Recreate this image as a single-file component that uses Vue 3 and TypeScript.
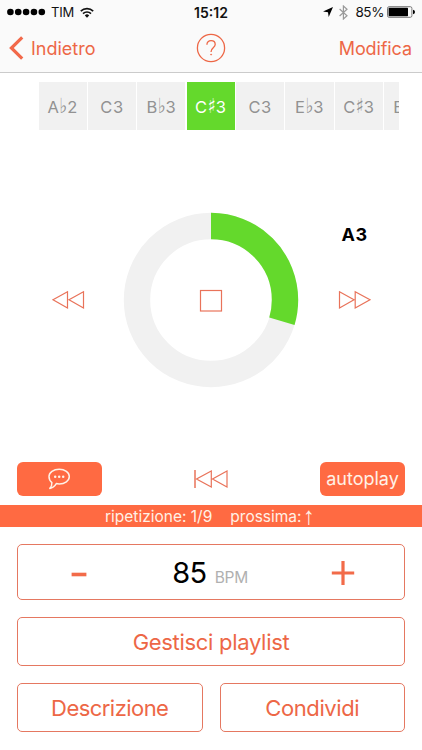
<script setup lang="ts">
import { ref } from 'vue'

interface Note {
  name: string
  accidental?: string
  octave?: number
}

const notes: Note[] = [
  { name: 'A', accidental: '♭', octave: 2 },
  { name: 'C', octave: 3 },
  { name: 'B', accidental: '♭', octave: 3 },
  { name: 'C', accidental: '♯', octave: 3 },
  { name: 'C', octave: 3 },
  { name: 'E', accidental: '♭', octave: 3 },
  { name: 'C', accidental: '♯', octave: 3 },
  { name: 'E' },
]
const activeIndex = 3
const bpm = ref(85)

const progress = 0.296
const radius = 74
const circumference = 2 * Math.PI * radius
const dash = `${progress * circumference} ${circumference}`
</script>

<template>
  <div class="screen">
    <header class="top">
      <div class="status">
        <div class="carrier">
          <svg width="40" height="8" viewBox="0 0 40 8"><circle v-for="i in 5" :key="i" :cx="3.4 + (i - 1) * 7.85" cy="4" r="3.3" /></svg>
          <span class="tim">TIM</span>
          <svg class="wifi" width="14" height="11" viewBox="0 0 14 11" fill="none" stroke="#111" stroke-width="1.7">
            <path d="M.8 4.1a9 9 0 0 1 12.4 0M3 6.6a5.8 5.8 0 0 1 8 0" />
            <path d="M4.8 8.4a3.2 3.2 0 0 1 4.4 0L7 10.8z" fill="#111" stroke="none" />
          </svg>
        </div>
        <span class="clock">15:12</span>
        <div class="indicators">
          <svg width="10" height="10" viewBox="0 0 10 10"><path d="M10 0 5.7 10 5 5.2 0 4.5z" /></svg>
          <svg class="bt" width="9" height="15" viewBox="0 0 9 15" fill="none" stroke="#999" stroke-width="1.2"><path d="M.6 4 8 10.8 4.4 14V1L8 4.2.6 11" /></svg>
          <span class="percent">85%</span>
          <svg class="battery" width="28" height="12" viewBox="0 0 28 12">
            <rect x=".5" y=".7" width="24.4" height="10.6" rx="1.6" fill="none" stroke="#777" />
            <rect x="1.6" y="1.8" width="19.4" height="8.4" rx=".6" />
            <path d="M26 3.8q2 .3 2 2.2t-2 2.2z" />
          </svg>
        </div>
      </div>
      <nav class="nav">
        <button class="back">
          <svg width="15" height="24" viewBox="0 0 15 24" fill="none" stroke="#f2694a" stroke-width="3.2"><path d="M13.2 1.3 2.4 12l10.8 10.7" /></svg>
          <span>Indietro</span>
        </button>
        <button class="help">
          <svg width="30" height="30" viewBox="0 0 30 30" fill="none" stroke="#ed6746" stroke-width="1.3">
            <circle cx="15" cy="15" r="13.6" />
            <path d="M10.9 11.8c0-2.5 1.7-4.1 4.2-4.1 2.4 0 4.1 1.5 4.1 3.7 0 3.2-4.1 3.4-4.1 7v.5" />
            <circle cx="15.1" cy="21.6" r=".5" fill="#ed6746" stroke-width=".8" />
          </svg>
        </button>
        <button class="edit">Modifica</button>
      </nav>
    </header>

    <div class="strip">
      <div v-for="(n, i) in notes" :key="i" class="note" :class="{ active: i === activeIndex, partial: !n.octave }">
        <span>{{ n.name }}</span><span v-if="n.accidental" class="acc">{{ n.accidental }}</span><span v-if="n.octave">{{ n.octave }}</span>
      </div>
    </div>

    <main class="player">
      <button class="side prev">
        <svg width="34" height="20" viewBox="0 0 34 20" fill="none" stroke="#e9735a" stroke-width="1.2"><path d="M16.5 1.7V18L2 9.8zM32.5 1.7V18L18 9.8z" /></svg>
      </button>
      <div class="dial">
        <svg width="176" height="176" viewBox="0 0 176 176" fill="none">
          <circle cx="88" cy="88" :r="radius" stroke="#f1f1f1" stroke-width="26.4" />
          <circle cx="88" cy="88" :r="radius" stroke="#64d92c" stroke-width="26.4" :stroke-dasharray="dash" transform="rotate(-90 88 88)" />
          <rect x="77.5" y="78.5" width="21" height="20.5" stroke="#e9735a" stroke-width="1.2" />
        </svg>
      </div>
      <div class="next">
        <strong>A3</strong>
        <svg width="34" height="20" viewBox="0 0 34 20" fill="none" stroke="#e9735a" stroke-width="1.2"><path d="M1.5 1.7V18L16 9.8zM17.2 1.7V18L32 9.8z" /></svg>
      </div>
    </main>

    <div class="tools">
      <button class="solid chat">
        <svg width="24" height="22" viewBox="0 0 24 22" fill="none" stroke="#fff1e6" stroke-width="1.5" stroke-linejoin="round">
          <path d="M12.2 1.3c5.7 0 10.1 3.2 10.1 7.3s-4.4 7.3-10.1 7.3c-1 0-2-.1-2.9-.3-1.6 2.7-3.8 4.4-6.5 4.8 1.5-1.5 2.2-3.5 2.1-5.8-1.8-1.4-2.9-3.4-2.9-6 0-4.1 4.5-7.3 10.2-7.3z" />
          <g fill="#fff1e6" stroke="none"><circle cx="8.2" cy="8.7" r="1.25" /><circle cx="12.2" cy="8.7" r="1.25" /><circle cx="16.2" cy="8.7" r="1.25" /></g>
        </svg>
      </button>
      <svg width="36" height="20" viewBox="0 0 36 20" fill="none" stroke="#e9735a" stroke-width="1.2"><path d="M18.3 2v16L3.5 10zM34 2v16L19.5 10z" /><path d="M2 1v18" stroke-width="1.5" /></svg>
      <button class="solid">autoplay</button>
    </div>

    <div class="banner">
      <span class="rep">ripetizione: 1/9</span>
      <span class="upcoming">prossima:</span><span class="arrow">↑</span>
    </div>

    <footer class="controls">
      <div class="tempo">
        <button class="step" @click="bpm--"><svg width="16" height="26" viewBox="0 0 16 26"><path d="M.6 12.7h14.8v3.6H.6z" fill="#f26b49" /></svg></button>
        <div class="value"><span class="num">{{ bpm }}</span><span class="unit">BPM</span></div>
        <button class="step" @click="bpm++"><svg width="24" height="26" viewBox="0 0 24 26"><path d="M.8 11.4h9.6V1h3.2v10.4h9.6v3.1h-9.6V25h-3.2V14.5H.8z" fill="#f26b49" /></svg></button>
      </div>
      <button class="outline playlist">Gestisci playlist</button>
      <div class="pair">
        <button class="outline description">Descrizione</button>
        <button class="outline share">Condividi</button>
      </div>
    </footer>
  </div>
</template>

<style>
body {
  background: #fff;
}
</style>

<style scoped>
.screen {
  width: 422px;
  height: 750px;
  overflow: hidden;
  box-sizing: border-box;
  background: #fff;
  font-family: Inter, "Liberation Sans", sans-serif;
}
svg {
  display: block;
  flex: none;
}
button {
  border: 0;
  padding: 0;
  background: none;
  font: inherit;
  color: #ed6746;
  display: flex;
  align-items: center;
  justify-content: center;
  box-sizing: border-box;
}
.top {
  height: 73px;
  box-sizing: border-box;
  border-bottom: 1px solid #cbcbcb;
  background: #fafafa;
}
.status {
  height: 24px;
  display: grid;
  grid-template-columns: 1fr auto 1fr;
  align-items: center;
  padding: 0 7px;
  font-size: 13px;
  color: #111;
}
.carrier,
.indicators {
  display: flex;
  align-items: center;
}
.tim {
  margin-left: 4px;
  letter-spacing: -0.2px;
}
.wifi {
  margin-left: 6px;
}
.clock {
  font-weight: 600;
  font-size: 14px;
}
.indicators {
  justify-content: flex-end;
}
.bt {
  margin-left: 6px;
}
.percent {
  margin-left: 7px;
  font-size: 13.5px;
  letter-spacing: -0.4px;
}
.battery {
  margin-left: 3px;
}
.nav {
  height: 48px;
  display: grid;
  grid-template-columns: 1fr auto 1fr;
  align-items: center;
  padding: 0 10px 1px 9px;
  font-size: 18px;
}
.back {
  justify-self: start;
  gap: 7px;
}
.edit {
  justify-self: end;
  letter-spacing: -0.1px;
}
.strip {
  width: 361px;
  height: 48px;
  margin: 9px 0 0 38px;
  padding-left: 0.5px;
  box-sizing: border-box;
  overflow: hidden;
  display: flex;
  gap: 1.2px;
}
.note {
  flex: 0 0 48.2px;
  box-sizing: border-box;
  display: flex;
  align-items: center;
  justify-content: center;
  padding-top: 1px;
  background: #f1f1f1;
  color: #929292;
  font-size: 16.5px;
  letter-spacing: 0.5px;
}
.note.active {
  background: #64d92c;
  color: #fff;
}
.note.partial {
  justify-content: flex-start;
  padding-left: 9px;
}
.acc {
  font-family: "DejaVu Sans", sans-serif;
  letter-spacing: 0;
  transform: scaleY(1.25);
}
.player {
  height: 332px;
  display: grid;
  grid-template-columns: 123px 176px 123px;
}
.prev {
  margin-left: 13px;
  padding-top: 7px;
}
.dial {
  align-self: center;
  padding-top: 7px;
}
.next {
  display: flex;
  flex-direction: column;
  align-items: center;
  padding: 94px 12px 0 0;
}
.next strong {
  font-size: 18px;
  line-height: 22px;
  font-weight: 700;
  letter-spacing: 0.4px;
}
.next svg {
  margin-top: 44px;
}
.tools {
  height: 34px;
  padding: 0 17px;
  display: flex;
  justify-content: space-between;
  align-items: center;
}
.solid {
  width: 85px;
  height: 34px;
  border-radius: 6px;
  background: #ff6a42;
  color: #fff1e6;
  font-size: 18px;
  padding-bottom: 1px;
}
.chat {
  padding-right: 1px;
}
.banner {
  height: 22px;
  margin-top: 9px;
  background: #ff6a42;
  color: #fff1e6;
  display: flex;
  align-items: center;
  padding-left: 105px;
  font-size: 15.5px;
  white-space: nowrap;
}
.upcoming {
  margin-left: 18px;
}
.arrow {
  font-family: "Liberation Sans", sans-serif;
  font-size: 18px;
  line-height: 22px;
  margin-left: 2px;
  transform: scale(1.3, 1.35);
}
.controls {
  padding: 17px 17px 0;
  display: flex;
  flex-direction: column;
}
.tempo,
.outline {
  border: 1px solid #e57861;
  border-radius: 5px;
  box-sizing: border-box;
}
.tempo {
  height: 56px;
  display: grid;
  grid-template-columns: 121px 1fr 123px;
  align-items: center;
}
.step {
  padding-top: 2px;
}
.value {
  display: flex;
  justify-content: center;
  align-items: baseline;
}
.num {
  color: #000;
  font-size: 29px;
  letter-spacing: -0.5px;
}
.unit {
  margin-left: 8px;
  color: #b0b0b0;
  font-size: 15.5px;
  letter-spacing: -0.3px;
}
.outline {
  height: 49px;
  font-size: 22px;
}
.playlist {
  margin-top: 17px;
  letter-spacing: -0.3px;
}
.description {
  letter-spacing: -0.55px;
}
.share {
  letter-spacing: -0.4px;
}
.pair {
  margin-top: 17.4px;
  display: grid;
  grid-template-columns: 1fr 1fr;
  gap: 17px;
}
</style>
